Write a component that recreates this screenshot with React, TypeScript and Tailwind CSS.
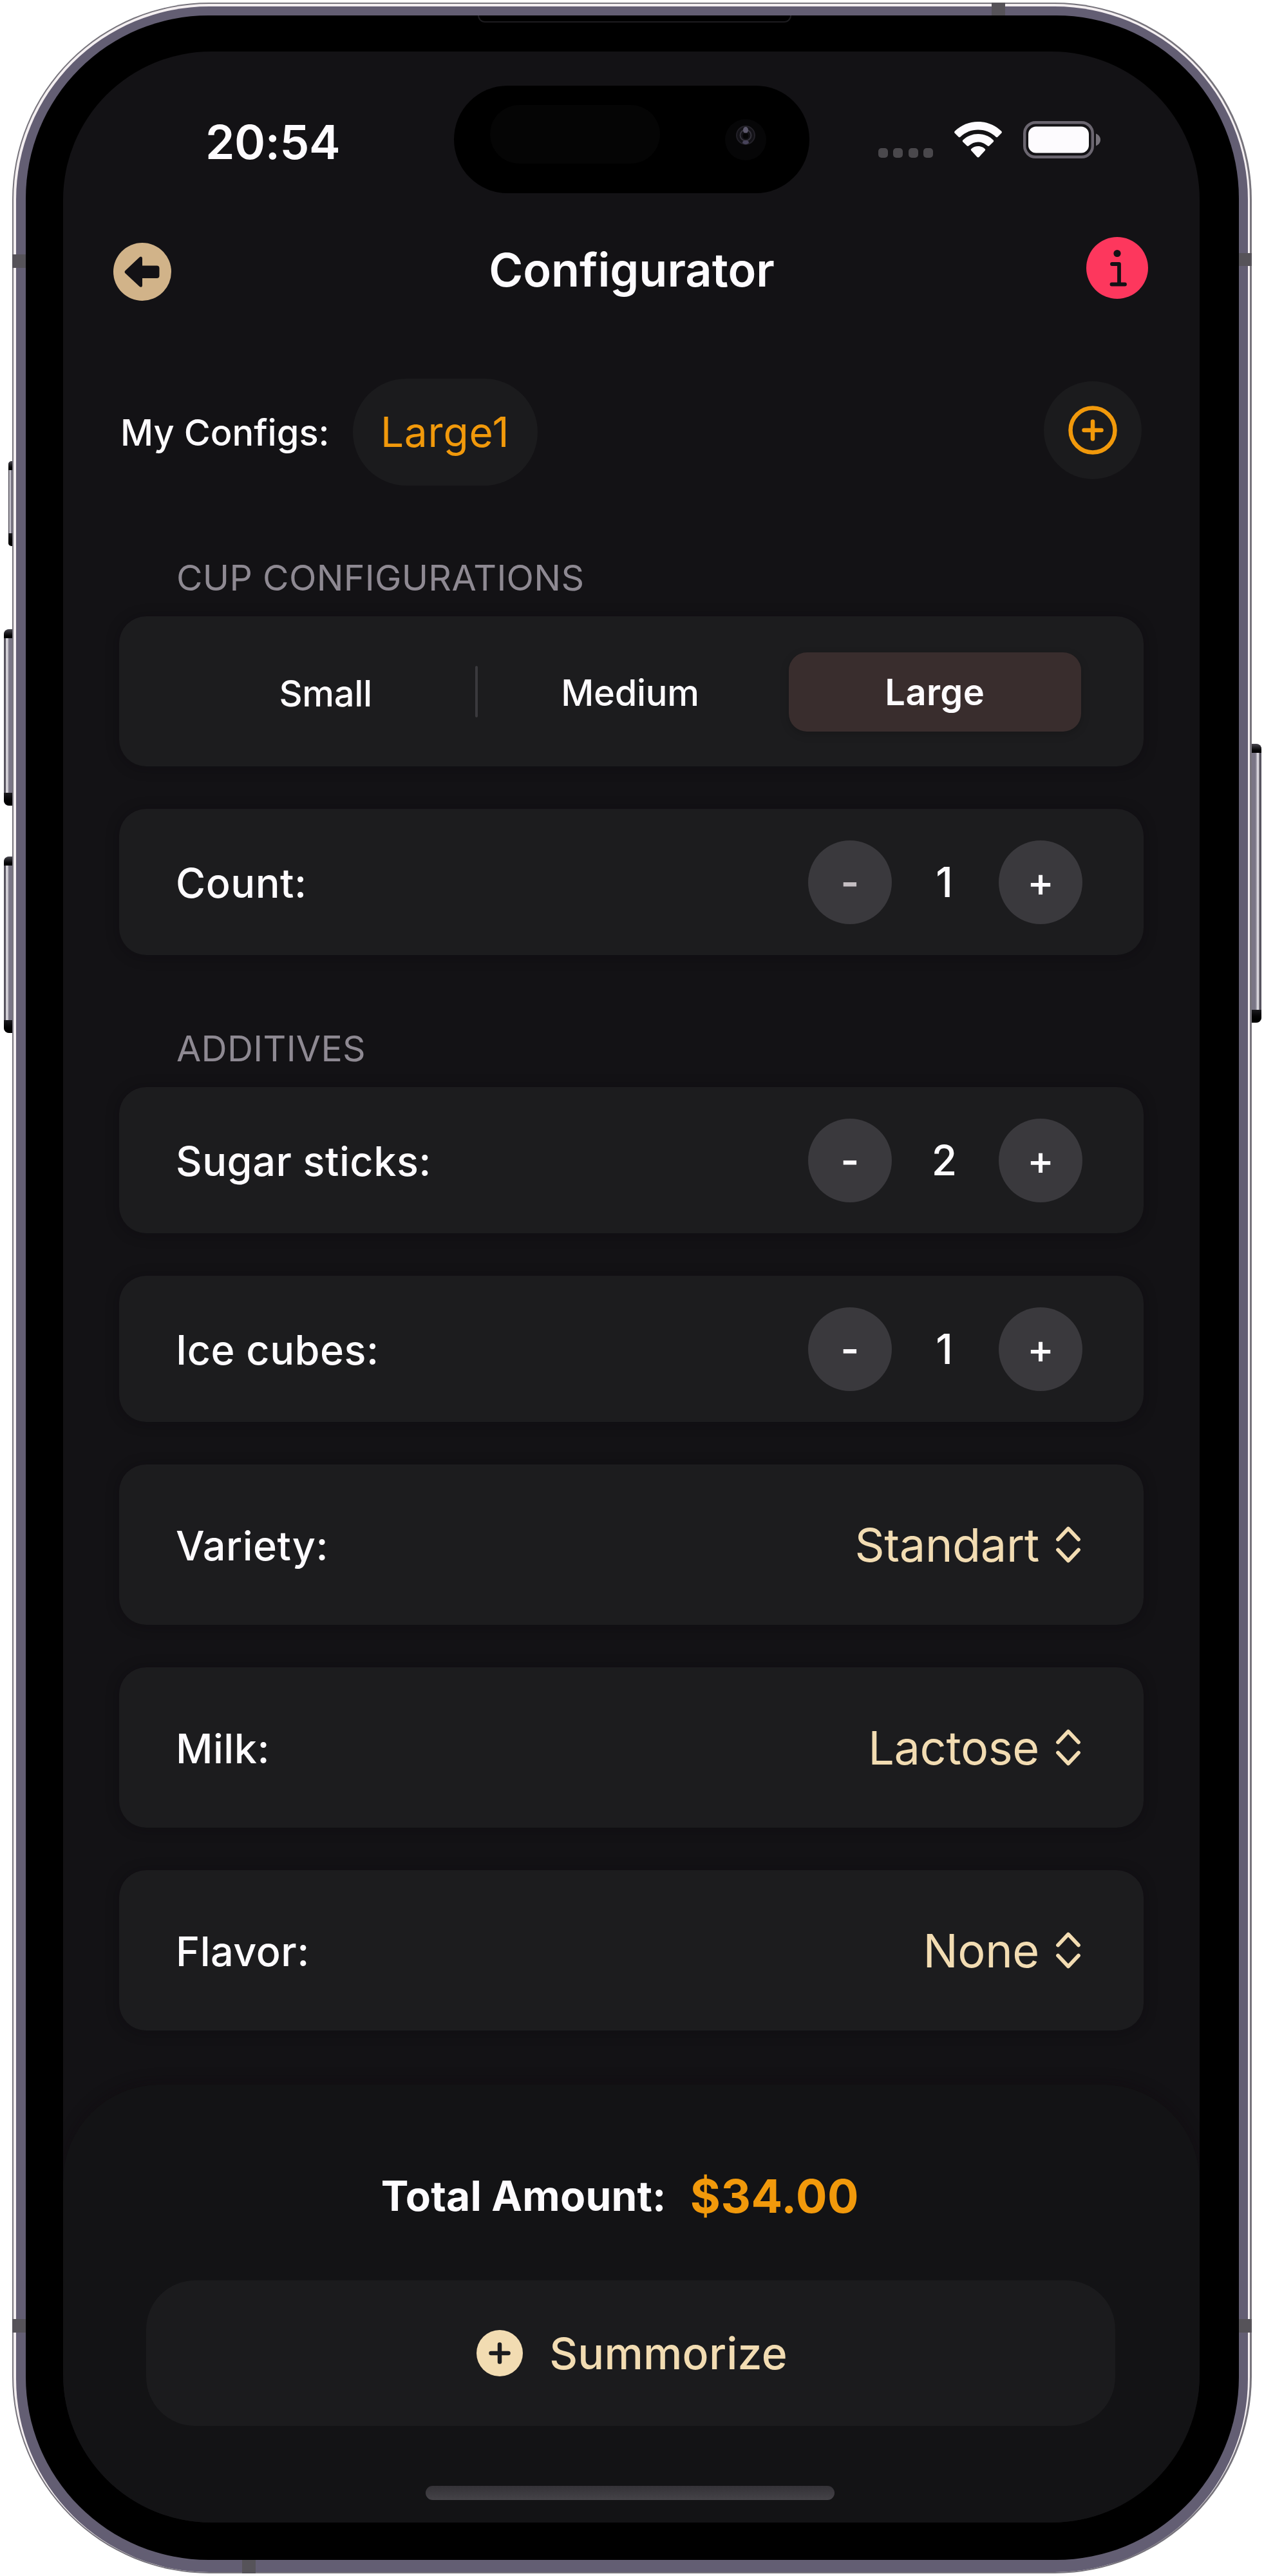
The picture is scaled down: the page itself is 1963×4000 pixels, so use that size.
import type { ReactNode } from "react";

function WifiIcon() {
  return (
    <svg width="74" height="56" viewBox="0 0 74 56" fill="#fdfbfe">
      <path d="M37 0C51 0 63.500 5.400 73 14.500c1.200 1.200 1.200 2.200.2 3.300L67.500 23.500c-1 1-2 1-3 0C57 16.400 47.500 12.500 37 12.500S17 16.400 9.500 23.500c-1 1-2 1-3 0L.8 17.800c-1-1.100-1-2.100.2-3.300C10.500 5.400 23 0 37 0z" />
      <path d="M37 19c9 0 17 3.400 23.300 9.200 1.200 1.100 1.200 2.200.2 3.200L54.500 37.200c-1 1-2 1-3.100.1C47.400 33.800 42.400 31.500 37 31.500S26.600 33.800 22.600 37.300c-1.100.9-2.100.9-3.100-.1L13.500 31.400c-1-1-1-2.100.2-3.200C20 22.400 28 19 37 19z" />
      <path d="M37 38c4 0 7.600 1.500 10.400 3.900 1.100 1 1.100 2 .1 3.100L38.600 54.700c-1 1.100-2.200 1.100-3.200 0L26.500 45c-1-1.100-1-2.100.1-3.100C29.400 39.500 33 38 37 38z" />
    </svg>
  );
}

function BatteryIcon() {
  return (
    <svg width="121" height="58" viewBox="0 0 121 58" fill="none">
      <rect x="2.200" y="2.200" width="105.600" height="53.600" rx="17" stroke="#6b6670" strokeWidth="4.400" />
      <rect x="8" y="8.500" width="94" height="41" rx="12" fill="#fdfbfe" />
      <path d="M113 19.500c4 1.500 7 5 7 9.500s-3 8-7 9.500z" fill="#77737b" />
    </svg>
  );
}

function BackIcon() {
  return (
    <svg width="90" height="90" viewBox="0 0 90 90">
      <circle cx="45" cy="45" r="45" fill="#d1b389" />
      <path
        d="M18.500 43.200 40.500 22.600c2.200-2 4.500-1 4.500 1.800V35.500H67.500a4 4 0 0 1 4 4V51a4 4 0 0 1-4 4H45V66c0 2.800-2.300 3.800-4.500 1.800L18.500 47.200c-1.200-1.200-1.200-2.800 0-4z"
        fill="#131115"
      />
    </svg>
  );
}

function InfoIcon() {
  return (
    <svg width="96" height="96" viewBox="0 0 96 96">
      <circle cx="48" cy="48" r="48" fill="#fd375d" />
      <circle cx="48" cy="25.500" r="5.600" fill="#131115" />
      <path d="M40 42h11v31.500M39.500 73.500H60" fill="none" stroke="#131115" strokeWidth="5.800" strokeLinecap="round" strokeLinejoin="round" />
    </svg>
  );
}

function ChevronUpDown() {
  return (
    <svg width="40" height="59" viewBox="0 0 40 59" fill="none" stroke="#f2dcb2" strokeWidth="5.800" strokeLinecap="round" strokeLinejoin="round">
      <path d="M4 21.500 20 4.500l16 17M4 37.500l16 17 16-17" />
    </svg>
  );
}

function Camera() {
  return (
    <svg width="66" height="66" viewBox="0 0 66 66" fill="none">
      <circle cx="33" cy="33" r="32" fill="#060607" />
      <circle cx="33" cy="26" r="14" fill="#131217" stroke="#232128" strokeWidth="2" />
      <circle cx="33" cy="26" r="8.500" stroke="#34323b" strokeWidth="2" />
      <ellipse cx="33" cy="18" rx="4" ry="5" fill="#5c586c" />
      <ellipse cx="33" cy="37" rx="5" ry="3" fill="#47435a" />
      <circle cx="33" cy="27" r="4.500" fill="#050506" />
    </svg>
  );
}

function SectionTitle({ children, className }: { children: ReactNode; className: string }) {
  return (
    <h2 className={`${className} mb-[30px] ml-[89px] h-[60px] text-[55.5px] leading-[60px] font-normal tracking-[0.3px] text-[#8e8992]`}>
      {children}
    </h2>
  );
}

function Card({ children, className }: { children: ReactNode; className: string }) {
  return (
    <div className={`${className} flex items-center rounded-[42px] bg-[#1c1c1e] shadow-[0_2px_20px_1px_rgba(10,6,12,0.3)]`}>
      {children}
    </div>
  );
}

function RowLabel({ children }: { children: ReactNode }) {
  return <span className="flex-1 pt-[2px] text-[63px] leading-[80px] font-medium tracking-[0.5px] text-[#fdfbfe]">{children}</span>;
}

function StepperRow({ label, value, atMinimum }: { label: string; value: number; atMinimum?: boolean }) {
  return (
    <Card className="h-[227px] pr-[95px] pl-[88px]">
      <RowLabel>{label}</RowLabel>
      <button className={`flex size-[130px] items-center justify-center rounded-full bg-[#3a393d] text-[62px] leading-none font-semibold ${atMinimum ? "text-[#c5bfc3]" : "text-[#fdfbfe]"}`}>
        -
      </button>
      <span className="w-[166px] pr-[3px] text-center text-[64px] leading-[80px] font-medium text-[#fdfbfe]">{value}</span>
      <button className="flex size-[130px] items-center justify-center rounded-full bg-[#3a393d] text-[63px] leading-none font-medium text-[#fdfbfe]">
        +
      </button>
    </Card>
  );
}

function SelectRow({ label, value }: { label: string; value: string }) {
  return (
    <Card className="h-[249px] pr-[97px] pl-[88px]">
      <RowLabel>{label}</RowLabel>
      <button className="flex items-center gap-[25px] text-[72px] leading-[88px] font-normal tracking-[-0.35px] text-[#f2dcb2]">
        {value}
        <ChevronUpDown />
      </button>
    </Card>
  );
}

function SizePicker() {
  return (
    <Card className="h-[233px] justify-center pr-[4px]">
      <div className="grid h-[140px] w-[1420px] grid-cols-3 items-center text-center text-[56px] leading-[70px] font-medium tracking-[-0.3px] text-[#fdfbfe]">
        <div className="flex items-center">
          <span className="flex-1 pt-[6px] pl-[5px]">Small</span>
          <span className="h-[80px] w-[4px] rounded-full bg-[#3a393d]" />
        </div>
        <span className="pt-[5px]">Medium</span>
        <span className="mx-[10px] mt-[2px] flex h-[123px] items-center justify-center rounded-[28px] bg-[#392d2d] font-semibold tracking-[0.4px] shadow-[0_4px_14px_rgba(0,0,0,0.18)]">
          Large
        </span>
      </div>
    </Card>
  );
}

function StatusBar() {
  return (
    <div className="mt-[53px] flex h-[167px] shrink-0 items-center">
      <div className="w-[607px] pt-[8px] pl-[221px] text-[73px] leading-[90px] font-semibold tracking-[-0.45px] text-[#fdfbfe]">20:54</div>
      <div className="flex h-full w-[552px] items-center justify-between rounded-[84px] bg-black pr-[66px] pl-[56px]">
        <span className="mb-[17px] h-[91px] w-[264px] rounded-[46px] bg-[#050505]" />
        <Camera />
      </div>
      <div className="ml-[107px] flex items-center">
        <div className="mt-[41px] flex gap-[8.4px]">
          <span className="size-[15px] rounded-[5px] bg-[#4a484c]" />
          <span className="size-[15px] rounded-[5px] bg-[#4a484c]" />
          <span className="size-[15px] rounded-[5px] bg-[#4a484c]" />
          <span className="size-[15px] rounded-[5px] bg-[#4a484c]" />
        </div>
        <div className="ml-[33px]">
          <WifiIcon />
        </div>
        <div className="ml-[33px]">
          <BatteryIcon />
        </div>
      </div>
    </div>
  );
}

function Screen() {
  return (
    <div className="flex h-[3837px] w-[1765px] flex-col overflow-hidden rounded-[230px] bg-[#131215]">
      <StatusBar />

      <header className="mt-[60px] grid h-[120px] shrink-0 grid-cols-[1fr_auto_1fr] items-center pr-[80px] pl-[78px]">
        <button className="mt-[4px] justify-self-start">
          <BackIcon />
        </button>
        <h1 className="mb-[2px] ml-[3px] text-[72px] leading-[90px] font-semibold text-[#fdfbfe]">Configurator</h1>
        <button className="mb-[8px] justify-self-end">
          <InfoIcon />
        </button>
      </header>

      <div className="mt-[106px] flex h-[167px] shrink-0 items-center pr-[90px] pl-[89px]">
        <span className="pt-[5px] text-[56px] leading-[70px] font-medium text-[#fdfbfe]">My Configs:</span>
        <button className="mt-[2px] ml-[36px] flex h-[166px] w-[287px] items-center justify-center rounded-[83px] bg-[#1b1b1d] text-[64px] leading-[80px] font-normal tracking-[0.8px] text-[#f1990b]">
          Large1
        </button>
        <button className="mb-[4px] ml-auto flex size-[152px] items-center justify-center rounded-full bg-[#1b1b1d]">
          <svg width="76" height="76" viewBox="0 0 76 76" fill="none" stroke="#f1990b" strokeWidth="6.500" strokeLinecap="round">
            <circle cx="38" cy="38" r="34.500" />
            <path d="M38 24.500v27M24.500 38h27" />
          </svg>
        </button>
      </div>

      <main className="flex flex-col px-[87px]">
        <SectionTitle className="mt-[114px]">CUP CONFIGURATIONS</SectionTitle>
        <div className="flex flex-col gap-[66px]">
          <SizePicker />
          <StepperRow label="Count:" value={1} atMinimum />
        </div>
        <SectionTitle className="mt-[115px]">ADDITIVES</SectionTitle>
        <div className="flex flex-col gap-[66px]">
          <StepperRow label="Sugar sticks:" value={2} />
          <StepperRow label="Ice cubes:" value={1} />
          <SelectRow label="Variety:" value="Standart" />
          <SelectRow label="Milk:" value="Lactose" />
          <SelectRow label="Flavor:" value="None" />
        </div>
      </main>

      <footer className="mt-[84px] flex flex-1 flex-col items-center rounded-t-[150px] bg-[#131315] pt-[123px] shadow-[0_-4px_20px_2px_rgba(16,8,14,0.3)]">
        <div className="flex h-[100px] items-center gap-[37px] pr-[35px]">
          <span className="text-[64px] leading-[90px] font-bold tracking-[0.2px] text-[#fdfbfe]">Total Amount:</span>
          <span className="text-[72px] leading-[90px] font-bold tracking-[0.6px] text-[#f1990b]">$34.00</span>
        </div>
        <button className="mt-[81px] mr-[2px] flex h-[226px] w-[1505px] shrink-0 items-center justify-center gap-[41px] rounded-[76px] bg-[#1b1b1d] pl-[4px] text-[68px] leading-[90px] font-medium tracking-[0.2px] text-[#f2dcb2]">
          <svg width="72" height="72" viewBox="0 0 72 72" fill="none">
            <circle cx="36" cy="36" r="36" fill="#f2dcb2" />
            <path d="M36 22.500v27M22.500 36h27" stroke="#1b1b1d" strokeWidth="6.500" strokeLinecap="round" />
          </svg>
          Summorize
        </button>
        <div className="mt-[93px] mr-[5px] h-[22px] w-[635px] shrink-0 rounded-full bg-linear-to-b from-[#343237] to-[#454348]" />
      </footer>
    </div>
  );
}

const ANTENNA_BANDS = [
  "top-[391px] left-0 h-[21px] w-[21px]",
  "top-[389px] right-0 h-[20px] w-[20px]",
  "top-[3597px] left-0 h-[21px] w-[21px]",
  "top-[3597px] right-0 h-[21px] w-[20px]",
  "top-0 left-[1521px] h-[20px] w-[21px]",
  "bottom-0 left-[357px] h-[21px] w-[21px]",
];

const SIDE_BUTTONS = [
  "top-[712px] -left-[6px] h-[132px] w-[8px] rounded-l-[5px] bg-linear-to-r",
  "top-[973px] -left-[13px] h-[274px] w-[15px] rounded-l-[8px] bg-linear-to-r",
  "top-[1326px] -left-[13px] h-[274px] w-[15px] rounded-l-[8px] bg-linear-to-r",
  "top-[1151px] -right-[15px] h-[433px] w-[17px] rounded-r-[8px] bg-linear-to-l",
];

function SideButton({ className }: { className: string }) {
  return (
    <span className={`absolute overflow-hidden from-[#57545f] from-15% via-[#f2f0f4] via-30% to-[#7a7686] to-55% ${className}`}>
      <span className="absolute inset-x-0 top-0 h-[14px] bg-linear-to-b from-[#4b4951] to-black" />
      <span className="absolute inset-x-0 bottom-0 h-[20px] bg-linear-to-b from-[#1c1b1f] to-black" />
    </span>
  );
}

export default function App() {
  return (
    <div className="h-[4000px] w-[1963px] overflow-hidden bg-white pt-[4px] pl-[19px] font-[Inter,'Liberation_Sans',sans-serif]">
      <div className="relative h-[3992px] w-[1925px]">
        {SIDE_BUTTONS.map((c) => (
          <SideButton key={c} className={c} />
        ))}
        {/* Chassis: dark rim, polished highlight, purple titanium, black bezel */}
        <div className="relative h-full w-full rounded-[306px] bg-[#77747c] pt-[2px] pr-[3px] pb-[2px] pl-[2px]">
          <div className="h-full rounded-[304px] bg-[#f4eff1] pt-[4px] pr-[3px] pl-[4px]">
            <div className="h-full rounded-[300px] bg-[#635e73] pt-[14px] pr-[14px] pb-[19px] pl-[15px]">
              <div className="relative h-full rounded-[284px] bg-black pt-[56px] pl-[58px]">
                <span className="absolute top-0 left-[702px] h-[11px] w-[487px] rounded-b-[11px] border-x-2 border-b-2 border-[#1d1c1f]" />
                <Screen />
              </div>
            </div>
          </div>
          {ANTENNA_BANDS.map((c) => (
            <span key={c} className={`absolute bg-[#565359] ${c}`} />
          ))}
        </div>
      </div>
    </div>
  );
}
